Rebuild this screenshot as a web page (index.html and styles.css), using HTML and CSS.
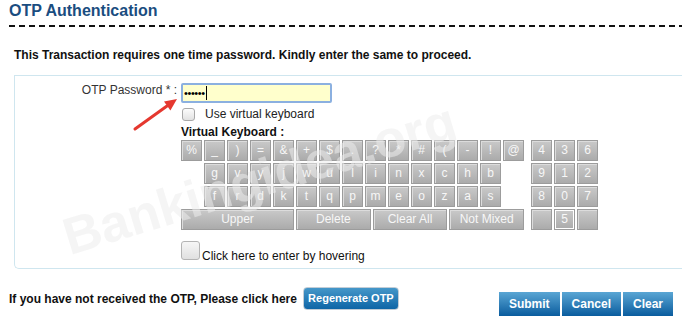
FILE: index.html
```html
<!DOCTYPE html>
<html>
<head>
<meta charset="utf-8">
<link rel="stylesheet" href="styles.css">
</head>
<body>
<div class="page">
  <h1 class="title">OTP Authentication</h1>
  <div class="rule"></div>
  <p class="intro">This Transaction requires one time password. Kindly enter the same to proceed.</p>
  <div class="box">
    <div class="label">OTP Password * :</div>
    <div class="fields">
      <div class="otp-input"><span class="dots">••••••</span><span class="caret"></span></div>
      <div class="opt"><span class="cb"></span><span class="opt-text">Use virtual keyboard</span></div>
      <div class="vk-title">Virtual Keyboard :</div>
      <div class="vk">
        <div class="keys">
          <div class="k">%</div><div class="k">_</div><div class="k">)</div><div class="k">=</div><div class="k">&amp;</div><div class="k">+</div><div class="k">$</div><div class="k">.</div><div class="k">?</div><div class="k">*</div><div class="k">#</div><div class="k">(</div><div class="k">-</div><div class="k">!</div><div class="k">@</div>
          <div class="k first">g</div><div class="k">v</div><div class="k">y</div><div class="k">j</div><div class="k">w</div><div class="k">u</div><div class="k">l</div><div class="k">i</div><div class="k">n</div><div class="k">x</div><div class="k">c</div><div class="k">h</div><div class="k">b</div>
          <div class="k first">f</div><div class="k">r</div><div class="k">d</div><div class="k">k</div><div class="k">t</div><div class="k">q</div><div class="k">p</div><div class="k">m</div><div class="k">e</div><div class="k">o</div><div class="k">z</div><div class="k">a</div><div class="k">s</div>
          <div class="k upper">Upper</div>
          <div class="actions"><div class="k">Delete</div><div class="k">Clear All</div><div class="k">Not Mixed</div></div>
        </div>
        <div class="numpad">
          <div class="k">4</div><div class="k">3</div><div class="k">6</div>
          <div class="k">9</div><div class="k">1</div><div class="k">2</div>
          <div class="k">8</div><div class="k">0</div><div class="k">7</div>
          <div class="k"></div><div class="k five">5</div><div class="k"></div>
        </div>
      </div>
      <div class="hover-row"><span class="cb-big"></span><span class="hover-text">Click here to enter by hovering</span></div>
    </div>
  </div>
  <div class="bottom">
    <div class="regen-group">
      <span class="regen-text">If you have not received the OTP, Please click here</span>
      <span class="regen">Regenerate OTP</span>
    </div>
    <div class="actions-bar">
      <span class="btn">Submit</span><span class="btn">Cancel</span><span class="btn">Clear</span>
    </div>
  </div>
  <svg class="arrow" width="52" height="42" viewBox="0 0 52 42">
    <line x1="5" y1="35" x2="37" y2="12" stroke="#e5382f" stroke-width="3" stroke-linecap="round"/>
    <polygon points="47,5 40.4,16.5 34,7.5" fill="#e5382f"/>
  </svg>
  <div class="watermark">Bankingidea.org</div>
</div>
</body>
</html>
```
FILE: styles.css
```css
body {
  margin: 0;
  background: #fff;
  font-family: "Liberation Sans", Arial, sans-serif;
  overflow: hidden;
}
.page {
  position: relative;
  width: 682px;
  height: 326px;
  overflow: hidden;
}
.title {
  margin: 0;
  padding: 1px 0 0 9px;
  font-size: 16px;
  line-height: 20px;
  font-weight: bold;
  color: #1a4d80;
}
.rule {
  margin: 4px 0 0 9px;
  height: 2px;
  background: repeating-linear-gradient(90deg, #111 0 6px, transparent 6px 10px);
}
.intro {
  margin: 21px 0 0 0;
  padding-left: 14px;
  font-size: 12px;
  line-height: 14px;
  font-weight: bold;
  color: #111;
}
.box {
  margin: 13px 0 0 14px;
  width: 700px;
  display: flex;
  border: 1px solid #cfe6ef;
  border-right: none;
  border-radius: 0 0 0 5px;
}
.label {
  width: 162px;
  flex: none;
  padding-top: 7px;
  text-align: right;
  font-size: 12px;
  line-height: 14px;
  color: #333;
}
.fields {
  padding-left: 4px;
  padding-bottom: 8px;
}
.otp-input {
  box-sizing: border-box;
  margin-top: 7px;
  width: 151px;
  height: 20px;
  border: 2px solid #8bb0e0;
  border-radius: 2px;
  background: #ffffcc;
  display: flex;
  align-items: center;
  padding-left: 1px;
}
.dots {
  font-size: 11px;
  line-height: 12px;
  letter-spacing: -0.4px;
  color: #000;
}
.caret {
  width: 1px;
  height: 14px;
  background: #000;
  margin-left: 1px;
}
.opt {
  margin-top: 4px;
  height: 14px;
  display: flex;
  align-items: center;
}
.cb {
  box-sizing: border-box;
  width: 13px;
  height: 13px;
  margin-left: 1px;
  border: 1px solid #a9a9a9;
  border-radius: 3px;
  background: linear-gradient(#fcfcfc, #e2e2e2);
}
.opt-text {
  margin-left: 10px;
  font-size: 12px;
  line-height: 14px;
  color: #222;
}
.vk-title {
  margin-top: 4px;
  font-size: 12px;
  line-height: 14px;
  font-weight: bold;
  color: #111;
}
.vk {
  margin-top: 1px;
  display: flex;
}
.keys {
  display: grid;
  grid-template-columns: repeat(15, 21px);
  grid-auto-rows: 21px;
  gap: 2px;
}
.numpad {
  margin-left: 7px;
  display: grid;
  grid-template-columns: repeat(3, 21px);
  grid-auto-rows: 21px;
  gap: 2px;
}
.k {
  box-sizing: border-box;
  border: 1px solid #9c9c9c;
  background: linear-gradient(#c9c9c9, #ababab);
  box-shadow: inset 1px 1px 0 #dcdcdc;
  color: #f7f7f7;
  font-size: 12px;
  line-height: 19px;
  text-align: center;
  white-space: nowrap;
}
.k.first {
  grid-column-start: 2;
}
.k.upper {
  grid-column: 1 / 6;
}
.actions {
  grid-column: 6 / 16;
  display: flex;
  gap: 2px;
}
.actions .k {
  flex: 1;
}
.k.five {
  box-shadow: inset 0 0 0 1px #fff;
}
.hover-row {
  margin-top: 11px;
  display: flex;
  align-items: flex-end;
}
.cb-big {
  box-sizing: border-box;
  width: 19px;
  height: 19px;
  border: 1px solid #b4b4b4;
  border-radius: 3px;
  background: linear-gradient(#f6f6f6, #e0e0e0);
}
.hover-text {
  margin-left: 2px;
  margin-bottom: -3px;
  font-size: 12px;
  line-height: 14px;
  color: #111;
}
.bottom {
  margin-top: 18px;
  padding: 0 9px;
  display: flex;
  align-items: flex-start;
}
.regen-group {
  display: flex;
  align-items: center;
  gap: 6px;
}
.regen-text {
  font-size: 12px;
  font-weight: bold;
  line-height: 14px;
  color: #111;
}
.regen {
  box-sizing: border-box;
  width: 96px;
  height: 23px;
  border: 1px solid #c3cdd6;
  border-radius: 4px;
  background: linear-gradient(#4597c9, #0e65a6);
  color: #fff;
  font-size: 11px;
  font-weight: bold;
  line-height: 21px;
  text-align: center;
}
.actions-bar {
  margin-left: auto;
  margin-top: 5px;
  display: flex;
  gap: 2px;
}
.btn {
  height: 24px;
  padding: 0 10px;
  background: linear-gradient(#5aa6d4, #0a5c9e);
  color: #fff;
  font-size: 12px;
  font-weight: bold;
  line-height: 24px;
}
.arrow {
  position: absolute;
  left: 130px;
  top: 94px;
}
.watermark {
  position: absolute;
  left: 72px;
  top: 211px;
  font-size: 52px;
  line-height: 52px;
  font-weight: bold;
  color: rgba(236, 236, 236, 0.55);
  white-space: nowrap;
  transform-origin: 0 100%;
  transform: rotate(-17deg);
  pointer-events: none;
}
```
